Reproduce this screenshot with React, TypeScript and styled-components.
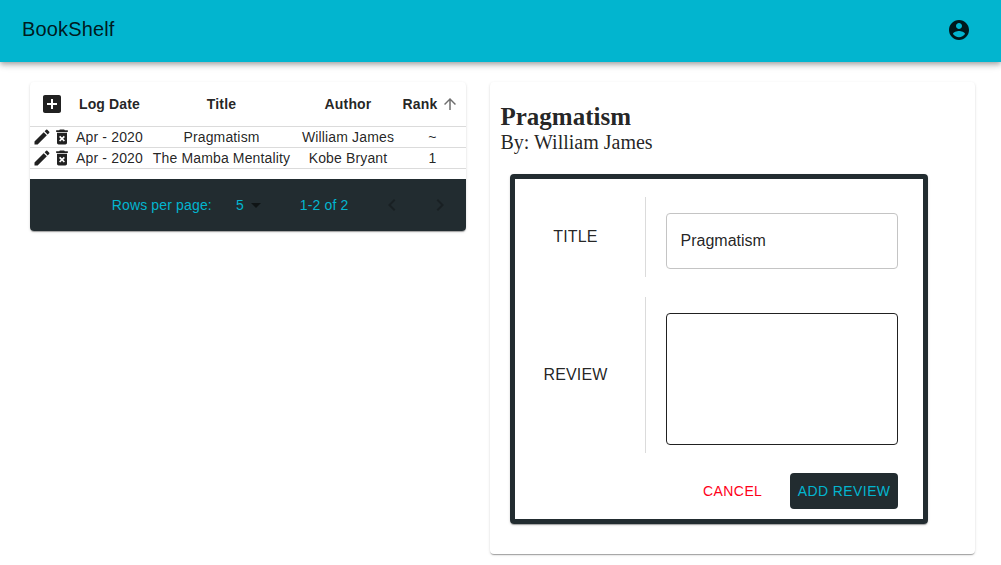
import React from "react";
import styled, { createGlobalStyle } from "styled-components";

const teal = "#02b5cf";
const dark = "#222c30";
const ink = "rgba(0, 0, 0, 0.87)";
const line = "#dbdbdb";

const GlobalStyle = createGlobalStyle`
  *, *::before, *::after { box-sizing: border-box; }
  body {
    margin: 0;
    background: #fff;
    color: ${ink};
    font-family: "Liberation Sans", Helvetica, Arial, sans-serif;
    font-size: 14px;
    line-height: 20px;
    letter-spacing: 0.15px;
  }
`;

const AppBar = styled.header`
  display: flex;
  align-items: center;
  justify-content: space-between;
  height: 62px;
  padding: 0 30px 2px 22px;
  background: ${teal};
  box-shadow: 0 2px 4px -1px rgba(0, 0, 0, 0.2), 0 4px 5px 0 rgba(0, 0, 0, 0.14),
    0 1px 10px 0 rgba(0, 0, 0, 0.12);
`;

const Brand = styled.h1`
  margin: 0;
  font-size: 20px;
  font-weight: 400;
  line-height: 32px;
  letter-spacing: 0.15px;
  padding-bottom: 2px;
`;

const Main = styled.main`
  display: flex;
  align-items: flex-start;
  gap: 24px;
  padding: 20px 26px 11px 30px;
`;

const Paper = styled.section`
  background: #fff;
  border-radius: 4px;
  box-shadow: 0 2px 1px -1px rgba(0, 0, 0, 0.2), 0 1px 1px 0 rgba(0, 0, 0, 0.14),
    0 1px 3px 0 rgba(0, 0, 0, 0.12);
`;

const LogPaper = styled(Paper)`
  width: 436px;
  overflow: hidden;
`;

const DetailPaper = styled(Paper)`
  width: 485px;
  height: 472px;
  padding: 22px 20px 0;
`;

const Row = styled.div<{ $head?: boolean }>`
  display: grid;
  grid-template-columns: 42px 75px 149px 104px 66px;
  align-items: center;
  height: ${(p) => (p.$head ? 45 : 21)}px;
  border-bottom: 1px solid ${line};
  font-weight: ${(p) => (p.$head ? 700 : 400)};
  text-align: center;
`;

const Cell = styled.div`
  display: flex;
  align-items: center;
  justify-content: center;
  white-space: nowrap;
`;

const RankCell = styled(Cell)<{ $head?: boolean }>`
  padding-right: ${(p) => (p.$head ? 0 : 1)}px;
`;

const Actions = styled.div`
  display: flex;
  padding-left: 2px;
`;

const AddCell = styled.div`
  display: flex;
  padding-left: 10px;
`;

const Icon = styled.svg<{ $size?: number; $opacity?: number }>`
  display: block;
  flex: none;
  width: ${(p) => p.$size ?? 24}px;
  height: ${(p) => p.$size ?? 24}px;
  fill: currentColor;
  opacity: ${(p) => p.$opacity ?? 1};
`;

const SortIcon = styled(Icon)`
  margin: 0 4px;
`;

const Pagination = styled.footer`
  display: flex;
  align-items: center;
  justify-content: flex-end;
  height: 52px;
  margin-top: 10px;
  padding-right: 2px;
  background: ${dark};
  color: ${teal};
`;

const PageSize = styled.div`
  display: flex;
  align-items: center;
  margin: 0 32px 0 24px;
  color: ${teal};

  svg { color: #000; }
`;

const PageButton = styled.button`
  display: flex;
  padding: 12px;
  border: 0;
  background: none;
  color: #000;
`;

const PageButtons = styled.div`
  display: flex;
  margin-left: 19.5px;
`;

const BookTitle = styled.h2`
  margin: 0 -9.5px;
  font: 700 25px/26px "Liberation Serif", "Times New Roman", serif;
  letter-spacing: 0;
`;

const BookAuthor = styled.p`
  margin: 0 -9.5px 19px;
  font: 400 20px/25px "Liberation Serif", "Times New Roman", serif;
  letter-spacing: 0;
`;

const ReviewForm = styled.form`
  width: 418px;
  height: 350px;
  padding: 18px 25px 10px 0;
  border: 5px solid ${dark};
  border-radius: 4px;
  box-shadow: 0 2px 1px -1px rgba(0, 0, 0, 0.2), 0 1px 1px 0 rgba(0, 0, 0, 0.14),
    0 1px 3px 0 rgba(0, 0, 0, 0.12);
`;

const Field = styled.div<{ $height: number }>`
  display: flex;
  height: ${(p) => p.$height}px;
  margin-bottom: 20px;
`;

const FieldLabel = styled.label`
  display: flex;
  align-items: center;
  justify-content: center;
  width: 131px;
  padding-right: 9px;
  border-right: 1px solid ${line};
  font-size: 16px;
`;

const TextInput = styled.input`
  width: 232px;
  height: 56px;
  margin: 16px 0 0 20px;
  padding: 0 14px 0 13.5px;
  border: 1px solid #c4c4c4;
  border-radius: 4px;
  color: ${ink};
  font: 400 16px "Liberation Sans", Helvetica, Arial, sans-serif;
  letter-spacing: 0;
  outline: none;
`;

const TextArea = styled.textarea`
  width: 232px;
  height: 132px;
  margin: 16px 0 0 20px;
  padding: 14px;
  border: 1px solid #212121;
  border-radius: 4px;
  font: inherit;
  resize: none;
  outline: none;
`;

const FormActions = styled.div`
  display: flex;
  justify-content: flex-end;
  gap: 20px;
`;

const Button = styled.button<{ $primary?: boolean }>`
  height: 36px;
  padding: 0 ${(p) => (p.$primary ? 7.5 : 8)}px;
  border: 0;
  border-radius: 4px;
  background: ${(p) => (p.$primary ? dark : "transparent")};
  color: ${(p) => (p.$primary ? teal : "#ff0019")};
  font: 400 14px "Liberation Sans", Helvetica, Arial, sans-serif;
  letter-spacing: 0.4px;
  white-space: nowrap;
`;

const paths = {
  account:
    "M12 2C6.48 2 2 6.48 2 12s4.48 10 10 10 10-4.48 10-10S17.52 2 12 2zm0 3c1.66 0 3 1.34 3 3s-1.34 3-3 3-3-1.34-3-3 1.34-3 3-3zm0 14.2c-2.5 0-4.71-1.28-6-3.22.03-1.99 4-3.08 6-3.08 1.99 0 5.97 1.09 6 3.08-1.29 1.94-3.5 3.22-6 3.22z",
  addBox:
    "M19 3H5c-1.11 0-2 .9-2 2v14c0 1.1.89 2 2 2h14c1.1 0 2-.9 2-2V5c0-1.1-.9-2-2-2zm-2 10h-4v4h-2v-4H7v-2h4V7h2v4h4v2z",
  edit:
    "M3 17.25V21h3.75L17.81 9.94l-3.75-3.75L3 17.25zM20.71 7.04c.39-.39.39-1.02 0-1.41l-2.34-2.34a.9959.9959 0 0 0-1.41 0l-1.83 1.83 3.75 3.75 1.83-1.83z",
  remove:
    "M6 19c0 1.1.9 2 2 2h8c1.1 0 2-.9 2-2V7H6v12zm2.46-7.12l1.41-1.41L12 12.59l2.12-2.12 1.41 1.41L13.41 14l2.12 2.12-1.41 1.41L12 15.41l-2.12 2.12-1.41-1.41L10.59 14l-2.13-2.12zM15.5 4l-1-1h-5l-1 1H5v2h14V4z",
  up: "M4 12l1.41 1.41L11 7.83V20h2V7.83l5.58 5.59L20 12l-8-8-8 8z",
  drop: "M7 10l5 5 5-5z",
  left: "M15.41 16.59L10.83 12l4.58-4.59L14 6l-6 6 6 6 1.41-1.41z",
  right: "M8.59 16.59L13.17 12 8.59 7.41 10 6l6 6-6 6-1.41-1.41z",
};

const books = [
  { date: "Apr - 2020", title: "Pragmatism", author: "William James", rank: "~" },
  { date: "Apr - 2020", title: "The Mamba Mentality", author: "Kobe Bryant", rank: "1" },
];

export default function App() {
  return (
    <>
      <GlobalStyle />
      <AppBar>
        <Brand>BookShelf</Brand>
        <Icon viewBox="0 0 24 24"><path d={paths.account} /></Icon>
      </AppBar>
      <Main>
        <LogPaper>
          <Row $head>
            <AddCell><Icon viewBox="0 0 24 24"><path d={paths.addBox} /></Icon></AddCell>
            <Cell>Log Date</Cell>
            <Cell>Title</Cell>
            <Cell>Author</Cell>
            <RankCell $head>
              Rank
              <SortIcon $size={18} $opacity={0.65} viewBox="0 0 24 24"><path d={paths.up} /></SortIcon>
            </RankCell>
          </Row>
          {books.map((book) => (
            <Row key={book.title}>
              <Actions>
                <Icon $size={20} viewBox="0 0 24 24"><path d={paths.edit} /></Icon>
                <Icon $size={20} viewBox="0 0 24 24"><path d={paths.remove} /></Icon>
              </Actions>
              <Cell>{book.date}</Cell>
              <Cell>{book.title}</Cell>
              <Cell>{book.author}</Cell>
              <RankCell>{book.rank}</RankCell>
            </Row>
          ))}
          <Pagination>
            <span>Rows per page:</span>
            <PageSize>
              5
              <Icon $opacity={0.54} viewBox="0 0 24 24"><path d={paths.drop} /></Icon>
            </PageSize>
            <span>1-2 of 2</span>
            <PageButtons>
              <PageButton aria-label="Previous page">
                <Icon $opacity={0.26} viewBox="0 0 24 24"><path d={paths.left} /></Icon>
              </PageButton>
              <PageButton aria-label="Next page">
                <Icon $opacity={0.26} viewBox="0 0 24 24"><path d={paths.right} /></Icon>
              </PageButton>
            </PageButtons>
          </Pagination>
        </LogPaper>
        <DetailPaper>
          <BookTitle>Pragmatism</BookTitle>
          <BookAuthor>By: William James</BookAuthor>
          <ReviewForm>
            <Field $height={80}>
              <FieldLabel htmlFor="title">TITLE</FieldLabel>
              <TextInput id="title" defaultValue="Pragmatism" />
            </Field>
            <Field $height={156}>
              <FieldLabel htmlFor="review">REVIEW</FieldLabel>
              <TextArea id="review" />
            </Field>
            <FormActions>
              <Button type="button">CANCEL</Button>
              <Button type="button" $primary>ADD REVIEW</Button>
            </FormActions>
          </ReviewForm>
        </DetailPaper>
      </Main>
    </>
  );
}
